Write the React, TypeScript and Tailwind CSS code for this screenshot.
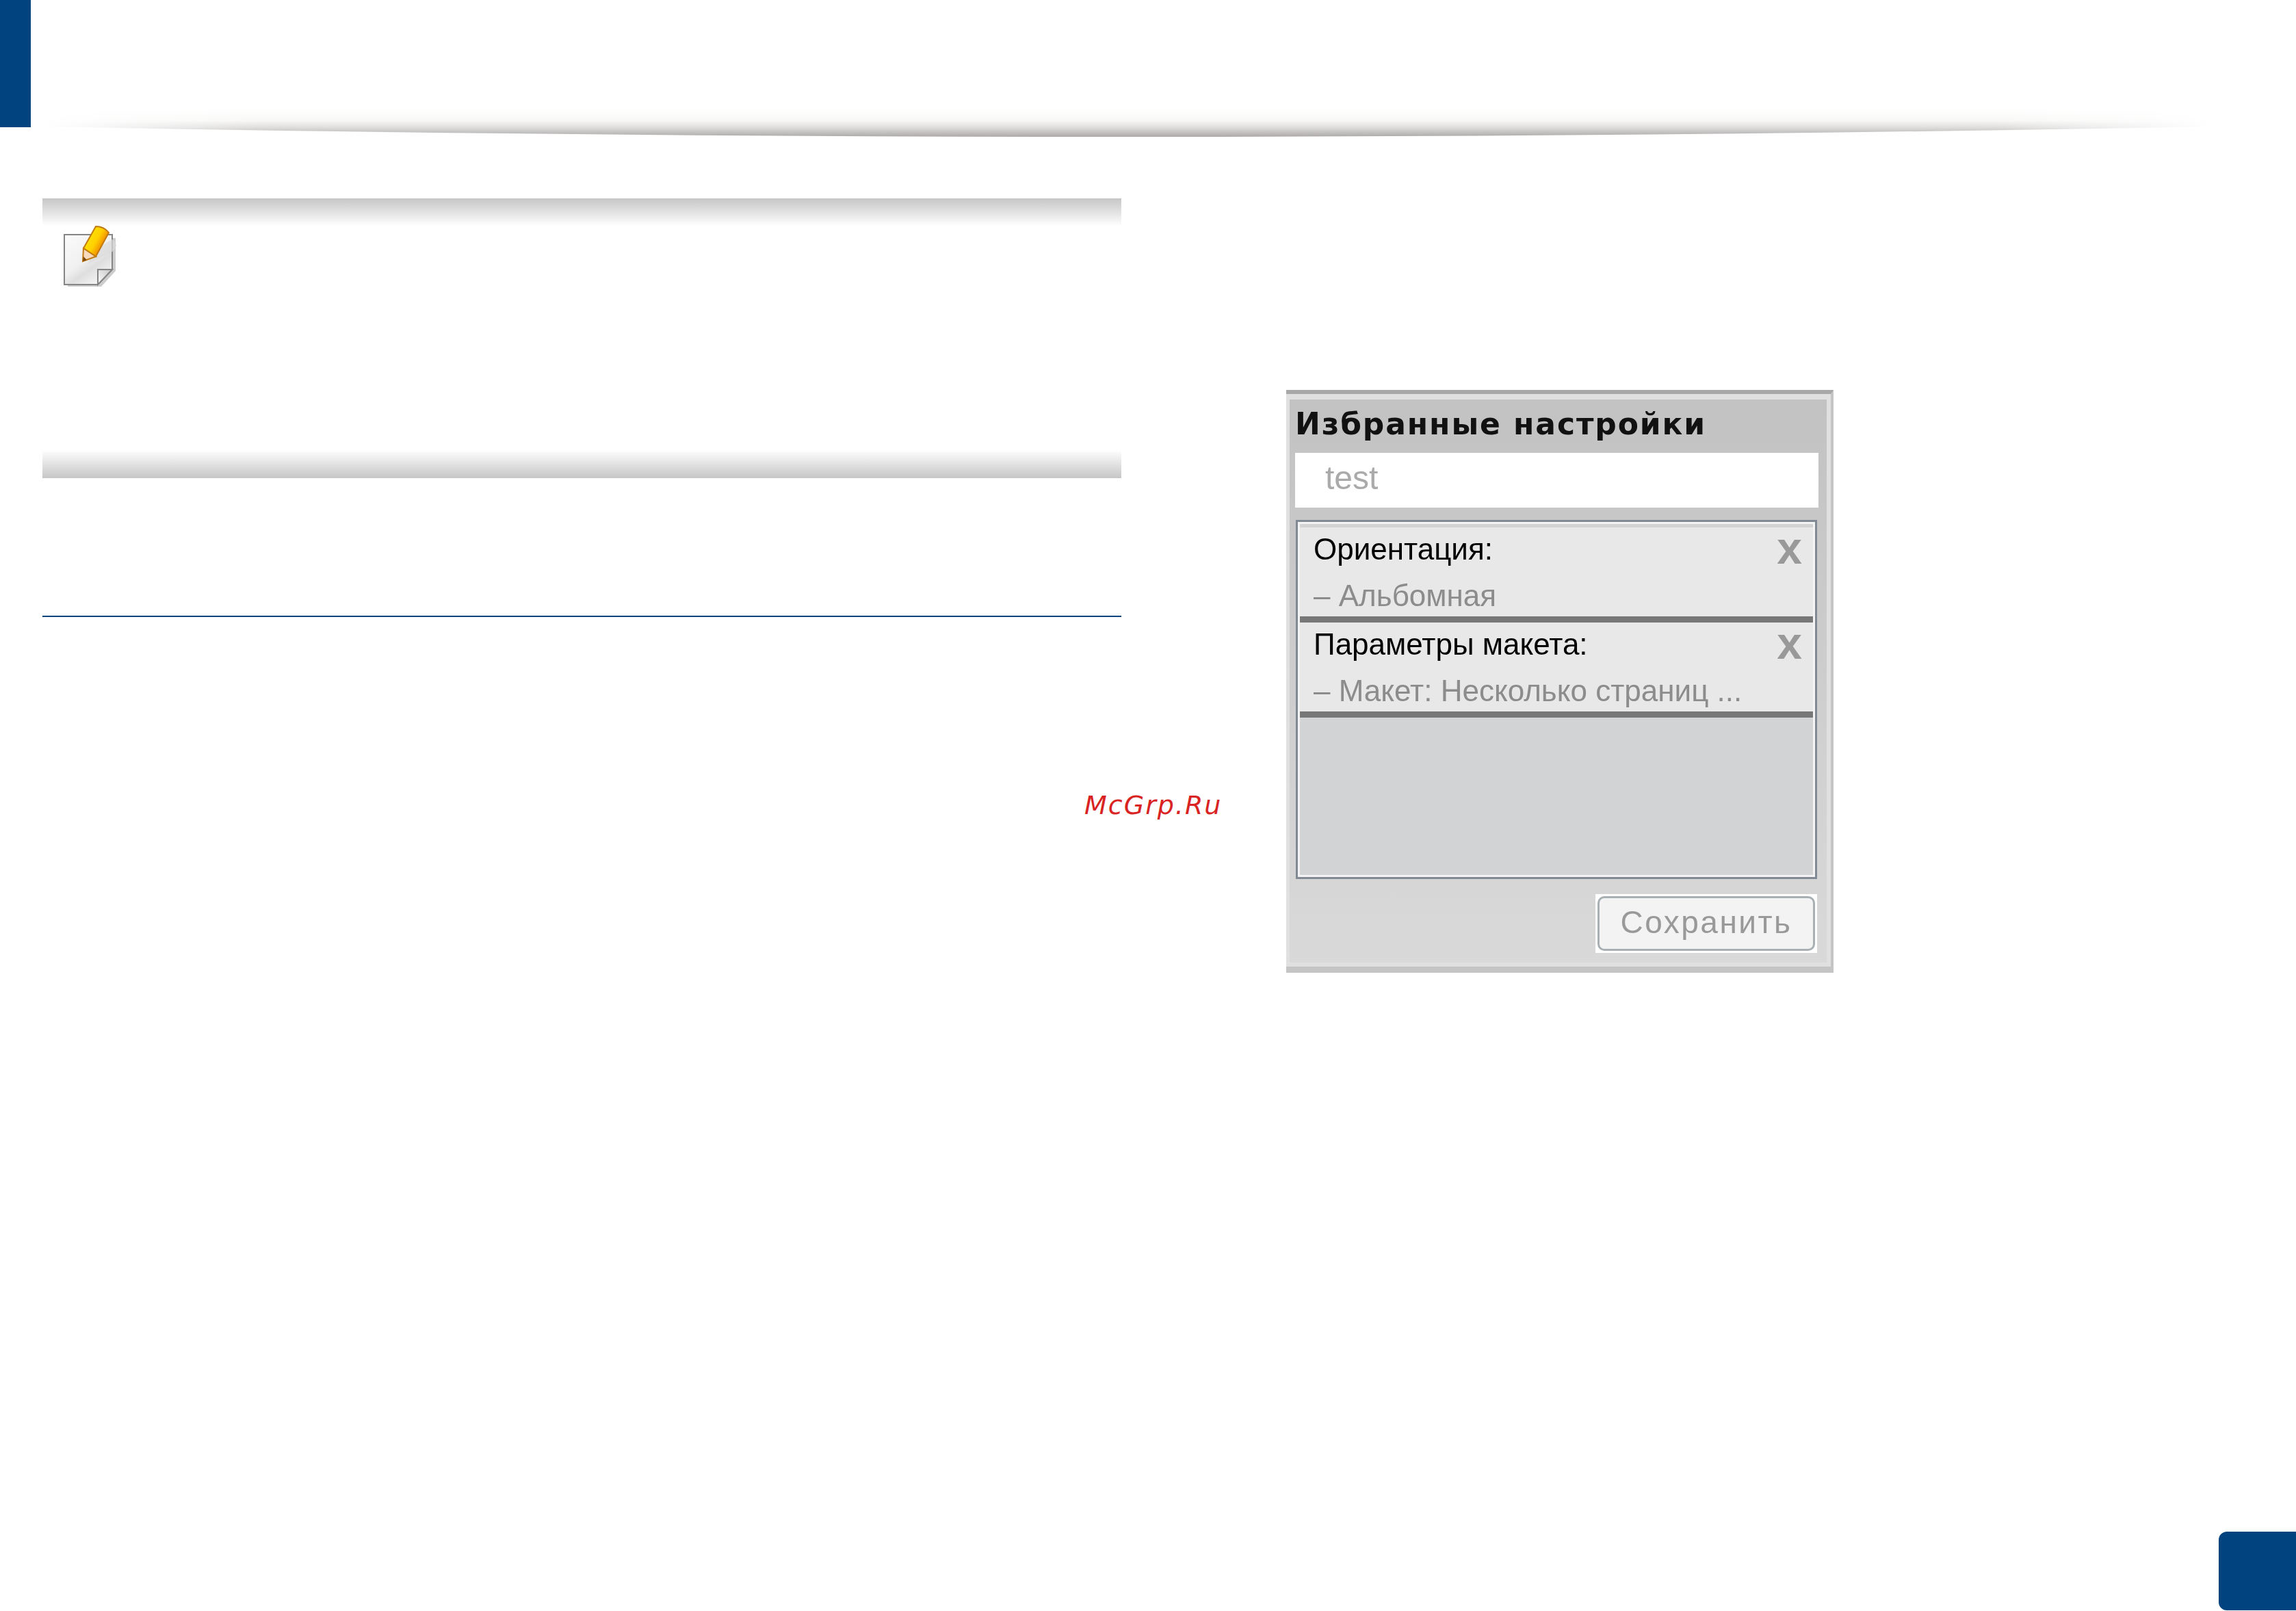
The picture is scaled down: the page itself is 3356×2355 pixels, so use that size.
const sans = "font-['Liberation_Sans','Noto_Sans',sans-serif]";

function NoteIcon() {
  return (
    <svg className="ml-[30px] mt-[-2px] block" width="110" height="96" viewBox="0 0 110 96" fill="none">
      <defs>
        <linearGradient id="sheet" x1="0" y1="0" x2="0.7" y2="1">
          <stop offset="0" stopColor="#fbfbfb" />
          <stop offset="0.55" stopColor="#f0f0f0" />
          <stop offset="0.72" stopColor="#dedede" />
          <stop offset="1" stopColor="#f6f6f6" />
        </linearGradient>
        <linearGradient id="fold" x1="0" y1="1" x2="1" y2="0">
          <stop offset="0" stopColor="#ffffff" />
          <stop offset="1" stopColor="#c4c4c4" />
        </linearGradient>
        <linearGradient id="pencil" x1="0.15" y1="0.3" x2="0.75" y2="0.7">
          <stop offset="0" stopColor="#ffe400" />
          <stop offset="0.55" stopColor="#ffcf00" />
          <stop offset="1" stopColor="#f08400" />
        </linearGradient>
      </defs>
      <path d="M7 20H77V68L56 91H7Z" fill="#cdcdcd" />
      <path d="M2 15H72V66L51 88H2Z" fill="url(#sheet)" stroke="#858585" strokeWidth="2" />
      <path d="M36 58L72 40Q84 30 72 22L48 36Z" fill="#dcdcdc" opacity="0.7" />
      <path d="M51 88V66H72Z" fill="url(#fold)" stroke="#858585" strokeWidth="2" />
      <path d="M30 35L48 3Q60 3 67 12L48 47Z" fill="url(#pencil)" stroke="#c07a10" strokeWidth="2" />
      <path d="M30 35L48 47L29 54Z" fill="#f7d9bc" stroke="#c07a10" strokeWidth="2" />
      <path d="M29 54L35 52L30 47Z" fill="#7a4a10" />
    </svg>
  );
}

function SettingRow({ title, value }: { title: string; value: string }) {
  return (
    <div className="h-[139px] bg-[#e8e8e8] border-b-[9px] border-[#777777] pl-[20px] pr-[16px]">
      <div className="flex justify-between h-[64px] items-center">
        <span className="text-[44px] text-black blur-[0.7px]">{title}</span>
        <span className="text-[66px] leading-none font-bold text-[#999999] blur-[0.6px] mt-[-4px]">x</span>
      </div>
      <div className="mt-[6px] h-[60px] leading-[60px] text-[44px] text-[#8c8c8c] blur-[0.7px] whitespace-nowrap">{value}</div>
    </div>
  );
}

export default function App() {
  return (
    <div className={`w-[3356px] h-[2355px] bg-white flex flex-col relative overflow-hidden ${sans}`}>
      {/* header */}
      <div className="h-[290px] flex items-start shrink-0">
        <div className="w-[45px] h-[186px] bg-[#00437f] shrink-0" />
        <svg className="mt-[160px] ml-[15px]" width="3175" height="42" viewBox="0 0 3175 42" fill="none">
          <defs>
            <linearGradient id="shade" gradientUnits="userSpaceOnUse" x1="0" y1="0" x2="0" y2="40">
              <stop offset="0" stopColor="#ffffff" />
              <stop offset="0.4" stopColor="#f8f8f7" />
              <stop offset="0.65" stopColor="#e0dfde" />
              <stop offset="1" stopColor="#aca8a8" />
            </linearGradient>
            <linearGradient id="ends" x1="0" y1="0" x2="1" y2="0">
              <stop offset="0" stopColor="#000000" />
              <stop offset="0.1" stopColor="#ffffff" />
              <stop offset="0.9" stopColor="#ffffff" />
              <stop offset="1" stopColor="#000000" />
            </linearGradient>
            <mask id="endsMask">
              <rect width="3175" height="42" fill="url(#ends)" />
            </mask>
          </defs>
          <path d="M0 25Q1587 55 3172 25V0H0Z" fill="url(#shade)" mask="url(#endsMask)" />
        </svg>
      </div>

      <div className="flex pl-[62px]">
        {/* note */}
        <div className="w-[1577px] shrink-0">
          <div className="h-[40px] bg-gradient-to-b from-[#c6c6c6] to-white" />
          <div className="h-[330px]">
            <NoteIcon />
          </div>
          <div className="h-[41px] bg-gradient-to-b from-white to-[#c6c6c6]" />
          <div className="mt-[201px] h-[2px] bg-[#00437f]" />
        </div>

        {/* favorites panel */}
        <div className="ml-[241px] mt-[280px] w-[800px] h-[852px] shrink-0 border-t-[6px] border-r-[4px] border-b-[9px] border-t-[#a8a8a8] border-r-[#c4c4c4] border-b-[#c4c4c4]">
          <div className="h-full border-t-[8px] border-l-[5px] border-r-[6px] border-b-[6px] border-[#e0e0e0] bg-gradient-to-b from-[#c2c2c2] to-[#d9d9d9] pl-[8px] flex flex-col items-start">
            <div className="h-[78px] flex items-center pb-[6px] text-[44px] leading-none font-bold text-[#111111] font-['DejaVu_Sans',sans-serif] tracking-[1.9px] blur-[0.6px] whitespace-nowrap">
              Избранные настройки
            </div>
            <div className="w-[765px] h-[80px] bg-white flex items-center pl-[44px] pb-[6px] text-[48px] text-[#aaaaaa] blur-[0.7px]">test</div>
            <div className="mt-[18px] ml-[1px] w-[762px] h-[525px] border-[3px] border-[#808994]">
              <div className="h-full border-[3px] border-[#f4f4f4] bg-[#d2d3d5] pt-[5px]">
                <SettingRow title="Ориентация:" value="– Альбомная" />
                <SettingRow title="Параметры макета:" value="– Макет: Несколько страниц ..." />
              </div>
            </div>
            <div className="mt-[22px] w-[763px] flex justify-end">
              <div className="w-[324px] h-[86px] bg-white p-[3px]">
                <div className="h-full rounded-[10px] border-[3px] border-[#a8b0b4] bg-[#f3f3f3] flex items-center justify-center pb-[3px] text-[46px] tracking-[2.5px] text-[#999999] blur-[0.7px]">
                  Сохранить
                </div>
              </div>
            </div>
          </div>
        </div>
      </div>

      {/* watermark */}
      <div className="absolute left-[1585px] top-[1155px] text-[38px] leading-[44px] italic tracking-[2px] text-[#d92323] font-['DejaVu_Sans',sans-serif]">
        McGrp.Ru
      </div>

      {/* page tab */}
      <div className="mt-auto self-end w-[113px] h-[115px] bg-[#00437f] rounded-l-[12px] mb-[1px]" />
    </div>
  );
}
